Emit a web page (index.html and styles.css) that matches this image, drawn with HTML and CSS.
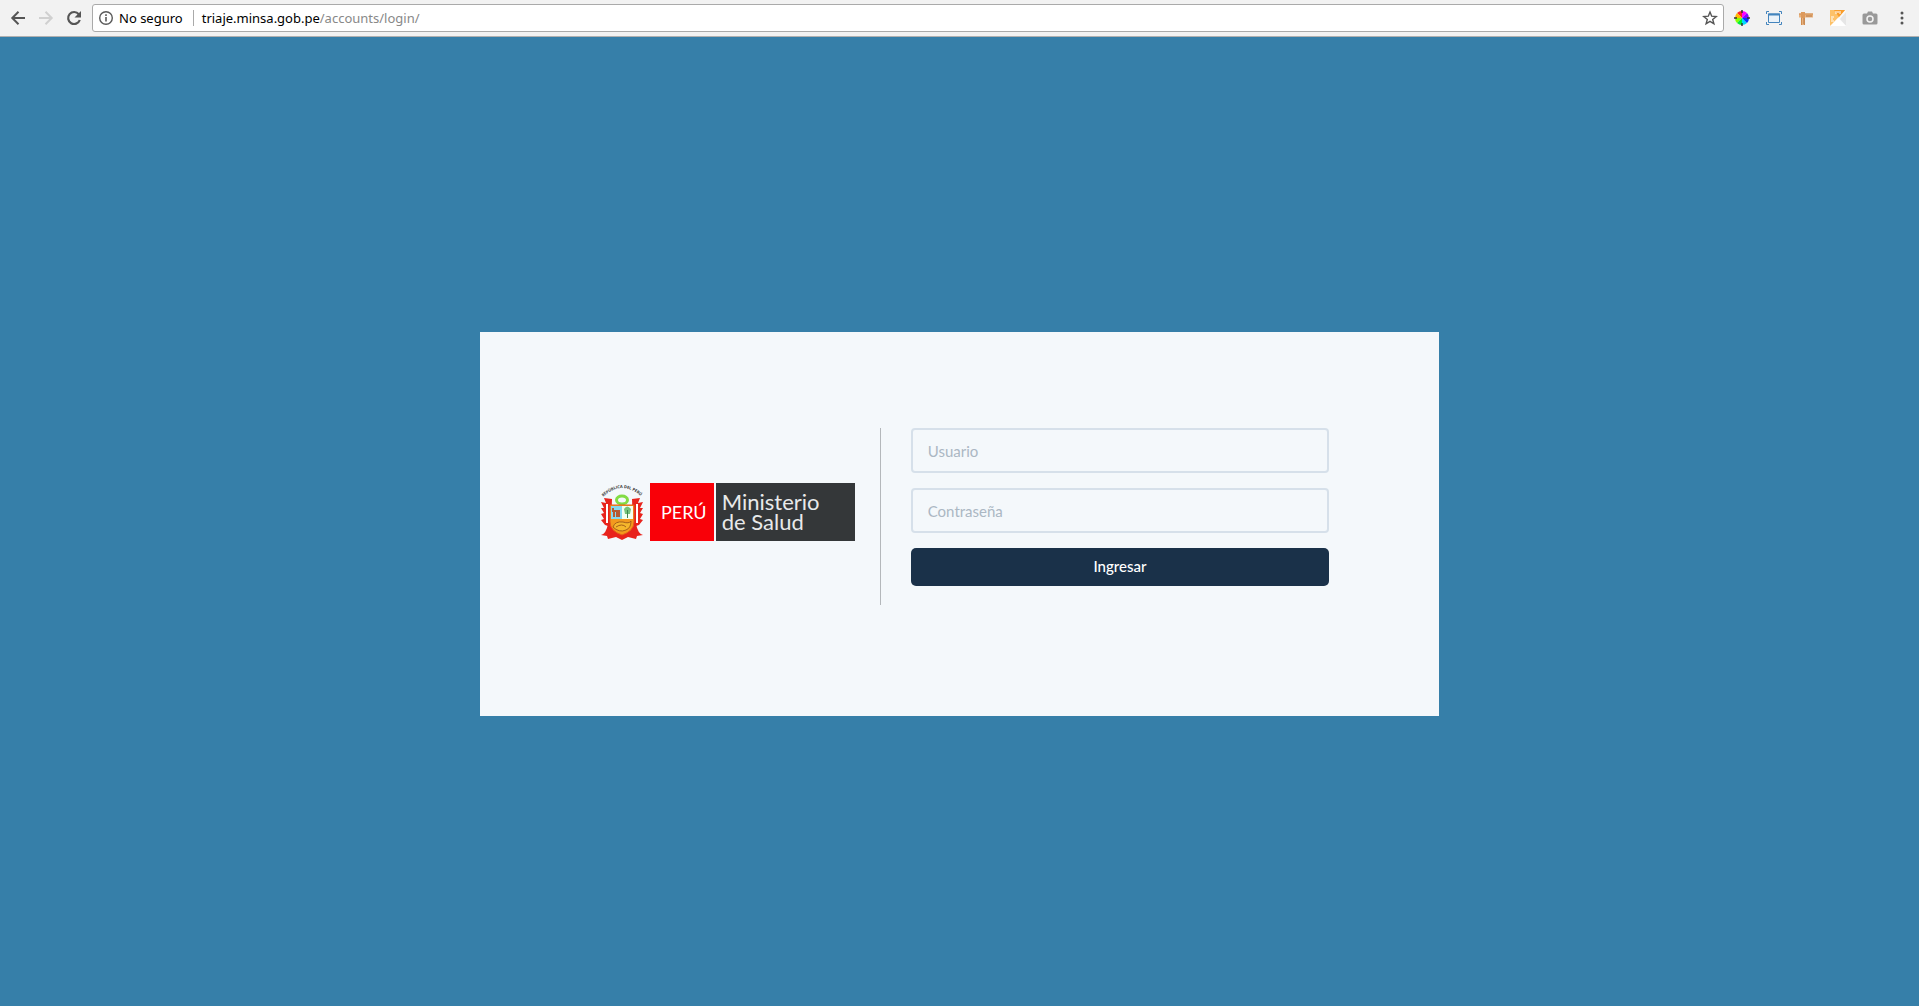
FILE: index.html
```html
<!DOCTYPE html>
<html lang="es">
<head>
<meta charset="utf-8">
<title>Triaje - Ingresar</title>
<meta name="viewport" content="width=device-width, initial-scale=1">
<link rel="stylesheet" href="styles.css">
</head>
<body>
<header class="toolbar">
  <button class="tool" type="button" aria-label="Atrás">
    <svg width="16" height="16" viewBox="0 0 16 16" fill="none" stroke="#555" stroke-width="2"><path d="M15 8H3M8.5 1.8 2.3 8l6.2 6.2"/></svg>
  </button>
  <button class="tool forward" type="button" aria-label="Adelante" disabled>
    <svg width="16" height="16" viewBox="0 0 16 16" fill="none" stroke="#d0d0d0" stroke-width="2"><path d="M1 8h12M7.500 1.800 13.700 8l-6.200 6.200"/></svg>
  </button>
  <button class="tool reload" type="button" aria-label="Recargar">
    <svg width="16" height="16" viewBox="0 0 16 16"><path d="M12.800 4.200A6 6 0 1 0 13.800 10" fill="none" stroke="#555" stroke-width="2.200"/><path d="M15 1v6.500H8.500z" fill="#555"/></svg>
  </button>
  <div class="address">
    <svg width="16" height="16" viewBox="0 0 16 16"><circle cx="8" cy="8" r="6.300" fill="none" stroke="#5a5a5a" stroke-width="1.400"/><path d="M7.200 7h1.600v4.500H7.200zM7.200 4.300h1.600v1.600H7.200z" fill="#5a5a5a"/></svg>
    <span class="security">No seguro</span>
    <span class="url">triaje.minsa.gob.pe<span class="path">/accounts/login/</span></span>
    <button class="tool" type="button" aria-label="Añadir a marcadores">
      <svg width="16" height="16" viewBox="0 0 16 16" fill="none" stroke="#555" stroke-width="1.400"><path d="m8 2 1.700 4.200 4.500.3-3.500 2.900 1.200 4.400L8 11.400l-3.900 2.400 1.200-4.400-3.500-2.900 4.500-.3z"/></svg>
    </button>
  </div>
  <nav class="extensions" aria-label="Extensiones">
    <button class="tool" type="button" aria-label="Selector de color">
      <svg width="16" height="16" viewBox="0 0 16 16"><path d="M8 8V1a7 7 0 0 1 5 2z" fill="#f0f"/><path d="M8 8 3 3a7 7 0 0 1 5-2z" fill="#f22"/><path d="M8 8H1a7 7 0 0 1 2-5z" fill="#fb0"/><path d="M8 8l-5 5a7 7 0 0 1-2-5z" fill="#8f0"/><path d="M8 8v7a7 7 0 0 1-5-2z" fill="#0e3"/><path d="M8 8l5 5a7 7 0 0 1-5 2z" fill="#0df"/><path d="M8 8h7a7 7 0 0 1-2 5z" fill="#03f"/><path d="m8 8 5-5a7 7 0 0 1 2 5z" fill="#80f"/><path d="M8 0v3M8 13v3M0 8h3M13 8h3" stroke="#333" stroke-width="1.500"/></svg>
    </button>
    <button class="tool" type="button" aria-label="Tamaño de ventana">
      <svg width="16" height="16" viewBox="0 0 16 16" fill="none" stroke="#4384bd"><path d="M.5 4V1.500H3M13 1.500h2.500V4M15.500 12v2.500H13M3 14.500H.5V12"/><path d="M2.500 4h11v8.500h-11z" fill="#eaf2f9"/><path d="M2 4.500h12" stroke-width="2"/></svg>
    </button>
    <button class="tool" type="button" aria-label="Regla">
      <svg width="16" height="16" viewBox="0 0 16 16"><path d="M1 3.500h14v4H7V15H3V7.500H1z" fill="#e8b27e"/><path d="M1 4h14M3.500 2v13" stroke="#cf8d50"/><path d="M6.500 8v7" stroke="#c98b54"/><path d="M3 2h4v6H3z" fill="#dd9a5d"/><path d="M9 5v2M11 5v2M13 5v2M5 9h1M5 11h1M5 13h1" stroke="#b87845"/></svg>
    </button>
    <button class="tool" type="button" aria-label="Medidor">
      <svg width="16" height="16" viewBox="0 0 16 16"><path d="M0 0h16v16H0z" fill="#f8f8f8"/><path d="M10 9l6-7v14z" fill="#e6e6e6"/><path d="M0 0h15L8 8 1 16H0z" fill="#fdc168"/><path d="M4 0h11L9 7z" fill="#f99d2a"/><path d="M0 16l8-8 8 8z" fill="#fff"/><path d="M6 1v3M8 1v2M10 1v3M1 7h3M1 9h2M1 11h3" stroke="#fff"/></svg>
    </button>
    <button class="tool" type="button" aria-label="Captura">
      <svg width="16" height="16" viewBox="0 0 16 16"><path d="M2 3.500h3L6 1.500h4l1 2h3q1.500 0 1.500 1.500v8q0 1.500-1.500 1.500H2Q.5 14.500.5 13V5Q.5 3.500 2 3.500z" fill="#999"/><circle cx="8" cy="9" r="3" fill="#999" stroke="#f2f2f2" stroke-width="1.500"/></svg>
    </button>
    <button class="tool" type="button" aria-label="Menú">
      <svg width="16" height="16" viewBox="0 0 16 16" fill="#555"><circle cx="8" cy="3" r="1.500"/><circle cx="8" cy="8" r="1.500"/><circle cx="8" cy="13" r="1.500"/></svg>
    </button>
  </nav>
</header>
<main class="page">
  <section class="card">
    <div class="brand">
      <svg class="crest" width="46" height="60" viewBox="0 0 46 60" role="img" aria-label="Escudo nacional">
        <defs><path id="arc" d="M1 17Q22-5 44 17"/></defs>
        <text class="motto"><textPath href="#arc" startOffset="3">REPÚBLICA DEL PERÚ</textPath></text>
        <path d="M12 17 4 16 6 21 1 20 4 26 1 26 4 31 1 32 4 37 1 38 5 43 11 45zM32 17l8-1-2 5 5-1-3 6h3l-3 5 3 1-3 5 3 1-4 5-6 2z" fill="#e8231c"/>
        <path d="M7 22v19M37 22v19" stroke="#fff" stroke-width="2"/>
        <path d="M10 20v24M34 20v24" stroke="#e8231c" stroke-width="2"/>
        <path d="M1 53q5-1 7-11h28q2 10 7 11l-6 1-1 3-8-2-6 3-6-3-8 2-1-3z" fill="#e8231c"/>
        <ellipse cx="22" cy="18" rx="5.500" ry="4" fill="#f4f8fb" stroke="#83dc45" stroke-width="3"/>
        <path d="M10 23h24v17q0 9-12 13Q10 49 10 40z" fill="#f39a1e" stroke="#e65b1b"/>
        <path d="M11 24h11v13H11z" fill="#86d9f0"/><path d="M22 24h11v13H22z" fill="#f3fff0"/>
        <path d="M13 26v3h6v6M14 29v6M17 30v5" fill="none" stroke="#b65a31" stroke-width="2"/>
        <path d="M24 27q3-5 7 0l-1 5h-5z" fill="#76c47a"/><path d="M27.500 28v8" stroke="#3f8650"/>
        <path d="M13 45q2-6 10-5 6 2 8-1 0 7-5 9-7 3-13-3z" fill="#f5b72c" stroke="#a65f19"/>
        <path d="M16 45q6-4 10 0" fill="none" stroke="#a65f19"/>
      </svg>
      <div class="country">PERÚ</div>
      <div class="ministry">Ministerio<br>de Salud</div>
    </div>
    <form class="login">
      <input class="field" type="text" name="usuario" placeholder="Usuario" aria-label="Usuario">
      <input class="field" type="password" name="clave" placeholder="Contraseña" aria-label="Contraseña">
      <button class="submit" type="submit">Ingresar</button>
    </form>
  </section>
</main>
</body>
</html>
```
FILE: styles.css
```css
* { box-sizing: border-box; }
body {
  display: flex;
  flex-direction: column;
  min-height: 100vh;
  margin: 0;
  background: #367fa9;
  font-family: Lato, sans-serif;
}
button { font: inherit; cursor: pointer; }
svg { display: block; flex: none; }
.toolbar {
  display: flex;
  align-items: center;
  height: 37px;
  padding: 0 9px 1px 10px;
  background: #f2f2f2;
  border-bottom: 1px solid #b0b0b0;
}
.tool { padding: 0; border: 0; background: none; }
.forward { margin-left: 12px; }
.reload { margin: 0 10px 0 12px; }
.address {
  display: flex;
  flex: 1;
  align-items: center;
  height: 28px;
  padding: 0 5px;
  background: #fff;
  border: 1px solid #aaa;
  border-radius: 3px;
  font: 13px/20px "Noto Sans", sans-serif;
}
.security { margin-left: 5px; padding-right: 10px; line-height: 16px; border-right: 1px solid #aaa; }
.url { flex: 1; margin-left: 8px; }
.path { color: #888; }
.extensions { display: flex; gap: 16px; margin-left: 10px; }
.page {
  display: flex;
  flex: 1;
  align-items: center;
  justify-content: center;
  padding-top: 5px;
}
.card {
  display: grid;
  grid-template-columns: 281px 1fr;
  width: 50%;
  min-width: 760px;
  padding: 96px 110px 111px 120px;
  background: #f4f8fb;
}
.brand {
  display: flex;
  align-items: center;
  height: 177px;
  padding-bottom: 9px;
  border-right: 1px solid #b4b8bb;
  color: #fff;
}
.motto { font: bold 4px "Open Sans", sans-serif; fill: #333; }
.country, .ministry { display: flex; align-items: center; height: 58px; }
.country {
  justify-content: center;
  width: 64px;
  margin: 0 2px 0 4px;
  padding-left: 4px;
  background: #f90008;
  font-size: 18px;
}
.ministry {
  width: 139px;
  padding-left: 6px;
  background: #343739;
  color: #e8e9ea;
  font-size: 22px;
  line-height: 20px;
}
.login { display: flex; flex-direction: column; gap: 15px; padding-left: 30px; }
.field {
  width: 100%;
  height: 45px;
  padding: 0 15px;
  border: 2px solid #d6e0ea;
  border-radius: 4px;
  background: #f4f8fb;
  color: #1a3149;
  font: 15px/20px Lato, sans-serif;
}
.field::placeholder { color: #abb7c3; opacity: 1; }
.submit {
  height: 38px;
  padding: 0 0 2px;
  border: 0;
  border-radius: 5px;
  background: #1a3149;
  color: #fff;
  font-size: 15px;
  font-weight: 500;
}
```
